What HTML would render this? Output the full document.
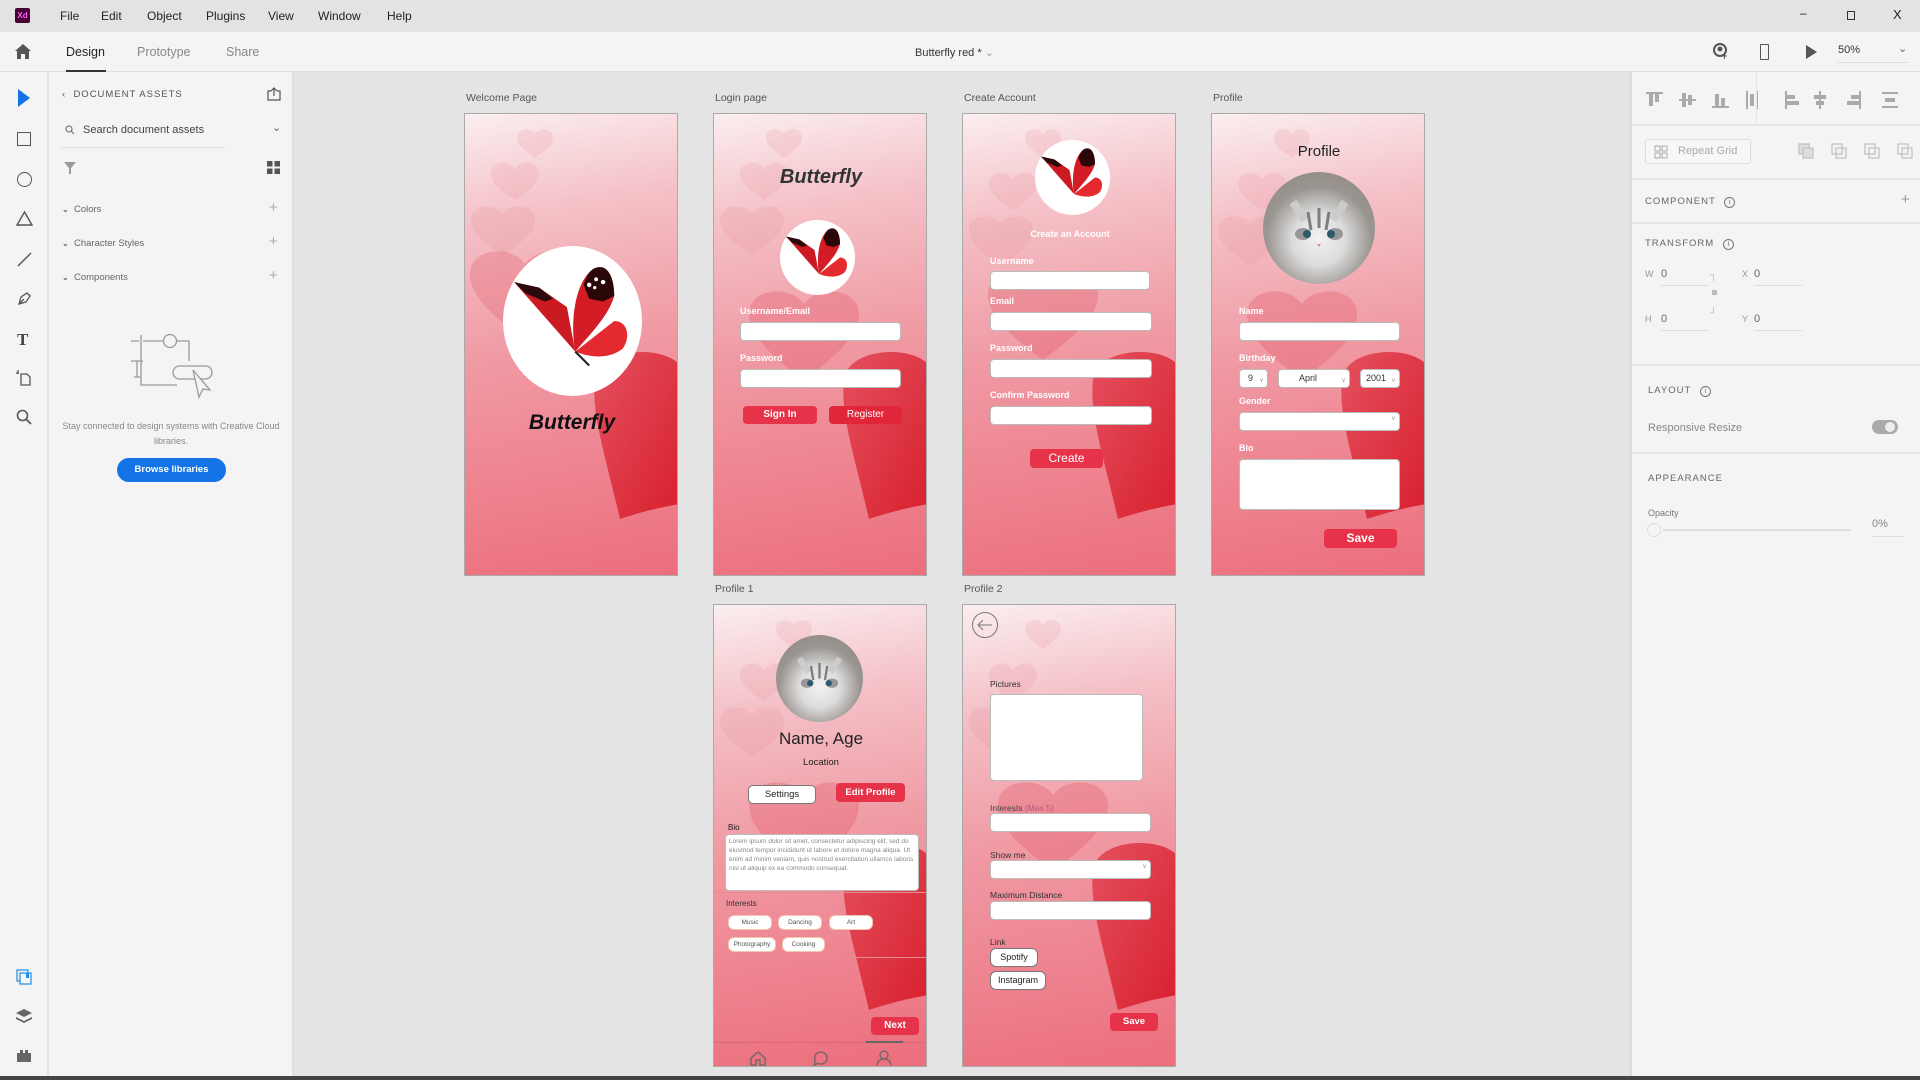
<!DOCTYPE html>
<html><head><meta charset="utf-8">
<style>
*{box-sizing:border-box;margin:0;padding:0}
body{width:1920px;height:1080px;overflow:hidden;background:#e4e4e4;font-family:"Liberation Sans",sans-serif;position:relative;color:#333}
.abs{position:absolute}
#menubar{left:0;top:0;width:1920px;height:32px;background:#e3e3e3}
#menubar span.m{position:absolute;top:9px;font-size:12px;color:#222}
#toolbar{left:0;top:32px;width:1920px;height:40px;background:#f4f4f4;border-bottom:1px solid #ddd}
#lefttools{left:0;top:72px;width:49px;height:1004px;background:#f4f4f4;border-right:2px solid #e2e2e2}
#assets{left:49px;top:72px;width:243px;height:1004px;background:#f4f4f4}
#right{left:1632px;top:72px;width:288px;height:1004px;background:#f4f4f4}
.hd{font-size:9.5px;letter-spacing:1px;color:#666}
.div{position:absolute;left:0;width:288px;height:2px;background:#e6e6e6}
.ab{position:absolute;width:214px;height:463px;border:1px solid #aaa;overflow:hidden;background:linear-gradient(170deg,#fbeef0 0%,#f4c1c7 22%,#f09aa4 50%,#ee8490 75%,#ec6e7c 100%)}
.ab svg.bg{position:absolute;left:0;top:0}
.lbl{position:absolute;font-size:10.5px;color:#555}
.fl{position:absolute;font-size:9px;font-weight:bold;color:#fff}
.in{position:absolute;background:#fff;border:1px solid #bbb;border-radius:4px}
.btn{position:absolute;background:#e6334a;color:#fff;font-weight:bold;font-size:10px;text-align:center;border-radius:4px}
.chip{position:absolute;background:#fff;border:1px solid #f0c8b0;border-radius:6px;font-size:6.5px;color:#555;text-align:center;height:15px;line-height:13px}
.circ{position:absolute;border-radius:50%;background:#fff;overflow:hidden}
.sel{font-size:9px;color:#333}
.sel i{position:absolute;right:4px;top:3px;font-style:normal;font-size:6px;color:#888}
</style></head><body>

<div id="menubar" class="abs">
 <div class="abs" style="left:15px;top:8px;width:15px;height:15px;background:#470137;border-radius:2px;color:#ff61f6;font-size:8px;line-height:15px;text-align:center;font-weight:bold">Xd</div>
 <span class="m" style="left:60px">File</span><span class="m" style="left:101px">Edit</span><span class="m" style="left:147px">Object</span><span class="m" style="left:206px">Plugins</span><span class="m" style="left:268px">View</span><span class="m" style="left:318px">Window</span><span class="m" style="left:387px">Help</span>
 <span class="m" style="left:1800px;top:6px">–</span>
 <div class="abs" style="left:1847px;top:11px;width:8px;height:9px;border:1px solid #333"></div>
 <span class="m" style="left:1893px;top:7px;font-size:13px">X</span>
</div>
<div id="toolbar" class="abs">
 <svg class="abs" style="left:15px;top:12px" width="16" height="15" viewBox="0 0 16 15"><path d="M8 0L0 7h2v8h4v-5h4v5h4V7h2z" fill="#555"/></svg>
 <span class="abs" style="left:66px;top:13px;font-size:12.5px;color:#222">Design</span>
 <div class="abs" style="left:66px;top:38px;width:40px;height:2px;background:#333"></div>
 <span class="abs" style="left:137px;top:13px;font-size:12.5px;color:#888">Prototype</span>
 <span class="abs" style="left:226px;top:13px;font-size:12.5px;color:#888">Share</span>
 <span class="abs" style="left:915px;top:14px;font-size:11px;color:#333">Butterfly red * <span style="color:#999">⌄</span></span>
 <svg class="abs" style="left:1712px;top:11px" width="16" height="17" viewBox="0 0 16 17"><circle cx="8" cy="7" r="6" fill="none" stroke="#555" stroke-width="2"/><circle cx="8" cy="6" r="2.5" fill="#555"/><path d="M10 13h5M12.5 11v5" stroke="#555"/></svg>
 <div class="abs" style="left:1760px;top:12px;width:9px;height:16px;border:1.5px solid #555;border-radius:1px"></div>
 <svg class="abs" style="left:1806px;top:13px" width="11" height="14"><path d="M0 0L11 7L0 14z" fill="#555"/></svg>
 <span class="abs" style="left:1838px;top:12px;font-size:11px;color:#333">50%</span>
 <div class="abs" style="left:1838px;top:30px;width:70px;height:1px;background:#ddd"></div>
 <span class="abs" style="left:1898px;top:10px;font-size:11px;color:#666">⌄</span>
</div>

<div id="lefttools" class="abs">
 <svg class="abs" style="left:18px;top:17px" width="12" height="18"><path d="M0 0L12 9L0 18z" fill="#1473e6"/></svg>
 <div class="abs" style="left:17px;top:60px;width:14px;height:14px;border:1.5px solid #555"></div>
 <div class="abs" style="left:17px;top:100px;width:15px;height:15px;border:1.5px solid #555;border-radius:50%"></div>
 <svg class="abs" style="left:16px;top:139px" width="17" height="15"><path d="M8.5 1L16 14H1z" fill="none" stroke="#555" stroke-width="1.4"/></svg>
 <svg class="abs" style="left:17px;top:180px" width="15" height="15"><path d="M1 14L14 1" stroke="#555" stroke-width="1.4"/></svg>
 <svg class="abs" style="left:17px;top:219px" width="15" height="15"><path d="M2 13L4 6L10 2L13 5L9 11Z M2 13L7 8" fill="none" stroke="#555" stroke-width="1.3"/></svg>
 <span class="abs" style="left:17px;top:258px;font-size:17px;font-weight:bold;font-family:'Liberation Serif',serif;color:#444">T</span>
 <svg class="abs" style="left:15px;top:297px" width="17" height="17"><path d="M1 4h3M3 1v4M6 5h6l3 3v8H6z" fill="none" stroke="#555" stroke-width="1.3"/></svg>
 <svg class="abs" style="left:16px;top:337px" width="16" height="16"><circle cx="6.5" cy="6.5" r="5" fill="none" stroke="#555" stroke-width="1.6"/><path d="M10 10l5 5" stroke="#555" stroke-width="1.8"/></svg>
 <svg class="abs" style="left:16px;top:897px" width="16" height="16"><rect x="1" y="1" width="11" height="11" fill="none" stroke="#1e8ee6" stroke-width="1.2"/><rect x="4" y="4" width="11" height="11" fill="#f4f4f4" stroke="#1e8ee6" stroke-width="1.2"/><rect x="10" y="4" width="3" height="5" fill="#1e8ee6"/></svg>
 <svg class="abs" style="left:16px;top:937px" width="16" height="14"><path d="M8 0L16 4L8 8L0 4Z" fill="#666"/><path d="M0 8L8 12L16 8L16 10L8 14L0 10Z" fill="#666"/></svg>
 <svg class="abs" style="left:17px;top:978px" width="14" height="12"><path d="M0 3h3V0h3v3h2V0h3v3h3v9H0z" fill="#666"/></svg>
</div>

<div id="assets" class="abs">
 <span class="abs hd" style="left:13px;top:17px;color:#555">‹&nbsp; DOCUMENT ASSETS</span>
 <svg class="abs" style="left:218px;top:15px" width="14" height="14"><path d="M4 4H1v9h12V4h-3M7 9V1M4 4l3-3 3 3" fill="none" stroke="#555" stroke-width="1.2"/></svg>
 <svg class="abs" style="left:16px;top:53px" width="10" height="10"><circle cx="4" cy="4" r="3" fill="none" stroke="#777" stroke-width="1.2"/><path d="M6 6l3 3" stroke="#777" stroke-width="1.2"/></svg>
 <span class="abs" style="left:34px;top:52px;font-size:11px;color:#444">Search document assets</span>
 <span class="abs" style="left:223px;top:49px;font-size:11px;color:#666">⌄</span>
 <div class="abs" style="left:12px;top:75px;width:164px;height:1px;background:#ddd"></div>
 <svg class="abs" style="left:15px;top:90px" width="12" height="12"><path d="M0 0h12L7 6v6H5V6z" fill="#999"/></svg>
 <svg class="abs" style="left:218px;top:89px" width="13" height="13"><rect x="0" y="0" width="5.5" height="5.5" fill="#555"/><rect x="7.5" y="0" width="5.5" height="5.5" fill="#555"/><rect x="0" y="7.5" width="5.5" height="5.5" fill="#555"/><rect x="7.5" y="7.5" width="5.5" height="5.5" fill="#555"/></svg>
 <span class="abs" style="left:13px;top:132px;font-size:9.5px;color:#666"><b style="font-size:8px">⌄</b>&nbsp; Colors</span>
 <span class="abs" style="left:13px;top:166px;font-size:9.5px;color:#666"><b style="font-size:8px">⌄</b>&nbsp; Character Styles</span>
 <span class="abs" style="left:13px;top:200px;font-size:9.5px;color:#666"><b style="font-size:8px">⌄</b>&nbsp; Components</span>
 <span class="abs" style="left:220px;top:127px;font-size:15px;color:#aaa">+</span>
 <span class="abs" style="left:220px;top:161px;font-size:15px;color:#aaa">+</span>
 <span class="abs" style="left:220px;top:195px;font-size:15px;color:#aaa">+</span>
 <svg class="abs" style="left:80px;top:258px" width="85" height="70" viewBox="0 0 85 70"><g fill="none" stroke="#999" stroke-width="1.3"><path d="M2 11h8M12 5v10M12 15v40h36M14 11h20"/><circle cx="41" cy="11" r="6.5"/><path d="M48 11h12v20"/><path d="M2 31h12M8 31v16M5 47h6"/><rect x="44" y="36" width="39" height="13" rx="6.5"/><path d="M64 40l17 20-7-1-4 8z" fill="#f4f4f4"/></g></svg>
 <div class="abs" style="left:8px;top:347px;width:228px;text-align:center;font-size:9px;line-height:15px;color:#888">Stay connected to design systems with Creative Cloud libraries.</div>
 <div class="abs" style="left:68px;top:386px;width:109px;height:24px;border-radius:12px;background:#1473e6;color:#fff;font-size:9.5px;font-weight:bold;text-align:center;line-height:24px">Browse libraries</div>
</div>
<div class="abs" style="left:292px;top:72px;width:2px;height:1004px;background:#e0e0e0"></div>

<div id="right" class="abs">
 <svg class="abs" style="left:14px;top:18px" width="270" height="20" viewBox="0 0 270 20" fill="#aaa">
  <rect x="0" y="2" width="17" height="2"/><rect x="3" y="4" width="4" height="12"/><rect x="9" y="4" width="4" height="8"/>
  <rect x="33" y="9" width="17" height="2"/><rect x="36" y="3" width="4" height="14"/><rect x="42" y="5" width="4" height="10"/>
  <rect x="66" y="16" width="17" height="2"/><rect x="69" y="4" width="4" height="12"/><rect x="75" y="8" width="4" height="8"/>
  <rect x="100" y="1" width="2" height="18"/><rect x="104" y="4" width="4" height="12"/><rect x="110" y="1" width="2" height="18"/>
  <rect x="139" y="1" width="2" height="18"/><rect x="141" y="5" width="8" height="4"/><rect x="141" y="11" width="12" height="4"/>
  <rect x="173" y="1" width="2" height="18"/><rect x="168" y="5" width="12" height="4"/><rect x="170" y="11" width="8" height="4"/>
  <rect x="213" y="1" width="2" height="18"/><rect x="205" y="5" width="8" height="4"/><rect x="201" y="11" width="12" height="4"/>
  <rect x="236" y="2" width="16" height="2"/><rect x="239" y="8" width="10" height="4"/><rect x="236" y="16" width="16" height="2"/>
 </svg>
 <div class="abs" style="left:124px;top:0;width:1px;height:52px;background:#e6e6e6"></div>
 <div class="div" style="top:52px"></div>
 <div class="abs" style="left:13px;top:67px;width:106px;height:25px;border:1px solid #ddd;border-radius:3px;background:#f7f7f7"></div>
 <svg class="abs" style="left:22px;top:73px" width="14" height="14" fill="none" stroke="#aaa"><rect x="1" y="1" width="5" height="5"/><rect x="8" y="1" width="5" height="5"/><rect x="1" y="8" width="5" height="5"/><rect x="8" y="8" width="5" height="5"/></svg>
 <span class="abs" style="left:46px;top:73px;font-size:11px;color:#aaa">Repeat Grid</span>
 <svg class="abs" style="left:166px;top:71px" width="118" height="18" fill="none" stroke="#c4c4c4" stroke-width="1.3"><rect x="1" y="1" width="10" height="10" fill="#ddd"/><rect x="5" y="5" width="10" height="10" fill="#ddd"/><rect x="34" y="1" width="10" height="10"/><rect x="38" y="5" width="10" height="10"/><rect x="67" y="1" width="10" height="10"/><rect x="71" y="5" width="10" height="10"/><rect x="100" y="1" width="10" height="10"/><rect x="104" y="5" width="10" height="10"/></svg>
 <div class="div" style="top:106px"></div>
 <span class="abs hd" style="left:13px;top:124px">COMPONENT <span style="display:inline-block;width:11px;height:11px;border:1px solid #777;border-radius:50%;font-size:7px;text-align:center;line-height:9px;letter-spacing:0;margin-left:5px">i</span></span>
 <span class="abs" style="left:269px;top:119px;font-size:15px;color:#999">+</span>
 <div class="div" style="top:150px"></div>
 <span class="abs hd" style="left:13px;top:166px">TRANSFORM <span style="display:inline-block;width:11px;height:11px;border:1px solid #777;border-radius:50%;font-size:7px;text-align:center;line-height:9px;letter-spacing:0;margin-left:5px">i</span></span>
 <span class="abs" style="left:13px;top:197px;font-size:9px;color:#999">W</span><span class="abs" style="left:29px;top:196px;font-size:11px;color:#666">0</span>
 <div class="abs" style="left:29px;top:213px;width:48px;height:1px;background:#ddd"></div>
 <span class="abs" style="left:78px;top:198px;font-size:10px;color:#bbb">┐</span>
 <div class="abs" style="left:80px;top:218px;width:5px;height:5px;background:#bbb"></div>
 <span class="abs" style="left:78px;top:236px;font-size:10px;color:#bbb">┘</span>
 <span class="abs" style="left:110px;top:197px;font-size:9px;color:#999">X</span><span class="abs" style="left:122px;top:196px;font-size:11px;color:#666">0</span>
 <div class="abs" style="left:122px;top:213px;width:48px;height:1px;background:#ddd"></div>
 <span class="abs" style="left:13px;top:242px;font-size:9px;color:#999">H</span><span class="abs" style="left:29px;top:241px;font-size:11px;color:#666">0</span>
 <div class="abs" style="left:29px;top:258px;width:48px;height:1px;background:#ddd"></div>
 <span class="abs" style="left:110px;top:242px;font-size:9px;color:#999">Y</span><span class="abs" style="left:122px;top:241px;font-size:11px;color:#666">0</span>
 <div class="abs" style="left:122px;top:258px;width:48px;height:1px;background:#ddd"></div>
 <div class="div" style="top:292px"></div>
 <span class="abs hd" style="left:16px;top:313px">LAYOUT <span style="display:inline-block;width:11px;height:11px;border:1px solid #777;border-radius:50%;font-size:7px;text-align:center;line-height:9px;letter-spacing:0;margin-left:5px">i</span></span>
 <span class="abs" style="left:16px;top:350px;font-size:11px;color:#888">Responsive Resize</span>
 <div class="abs" style="left:240px;top:348px;width:26px;height:14px;border-radius:7px;background:#aaa"></div>
 <div class="abs" style="left:253px;top:350px;width:10px;height:10px;border-radius:50%;background:#eee"></div>
 <div class="div" style="top:380px"></div>
 <span class="abs hd" style="left:16px;top:401px">APPEARANCE</span>
 <span class="abs" style="left:16px;top:436px;font-size:9px;color:#777">Opacity</span>
 <div class="abs" style="left:15px;top:451px;width:14px;height:14px;border-radius:50%;border:1.5px solid #ddd;background:#f4f4f4"></div>
 <div class="abs" style="left:31px;top:457px;width:188px;height:2px;background:#ddd"></div>
 <span class="abs" style="left:240px;top:446px;font-size:11px;color:#888">0%</span>
 <div class="abs" style="left:240px;top:464px;width:32px;height:1px;background:#ddd"></div>
</div>
<div class="abs" style="left:1630px;top:72px;width:2px;height:1004px;background:#dcdcdc"></div>
<div class="abs" style="left:0;top:1076px;width:1920px;height:4px;background:#444"></div>

<span class="lbl" style="left:466px;top:92px">Welcome Page</span>
<span class="lbl" style="left:715px;top:92px">Login page</span>
<span class="lbl" style="left:964px;top:92px">Create Account</span>
<span class="lbl" style="left:1213px;top:92px">Profile</span>
<span class="lbl" style="left:715px;top:583px">Profile 1</span>
<span class="lbl" style="left:964px;top:583px">Profile 2</span>

<!-- WELCOME -->
<div class="ab" style="left:464px;top:113px">
 <svg class="bg" width="214" height="463" viewBox="0 0 214 463"><defs><linearGradient id="hr" x1="0" y1="0" x2="1" y2="1"><stop offset="0" stop-color="#e4505e"/><stop offset="1" stop-color="#d8202e"/></linearGradient></defs>
  <g fill="#e88a96" opacity=".18"><path d="M70 20c5-8 18-6 18 4 0 8-10 14-18 20-8-6-18-12-18-20 0-10 13-12 18-4z"/><path d="M50 55c6-10 24-8 24 5 0 10-12 18-24 26-12-8-24-16-24-26 0-13 18-15 24-5z"/><path d="M38 100c8-12 32-10 32 6 0 14-16 24-32 36-16-12-32-22-32-36 0-16 24-18 32-6z"/></g>
  <path d="M60 150c14-20 55-16 55 10 0 25-28 45-55 66-27-21-55-41-55-66 0-26 41-30 55-10z" fill="#e25d6b" opacity=".3"/>
  <path d="M214 250c-20-20-80-15-84 15-4 35 10 75 25 140 30-10 45-12 59-15z" fill="url(#hr)"/>
 </svg>
 <div class="circ" style="left:38px;top:132px;width:139px;height:150px">
  <svg width="139" height="150" viewBox="0 0 100 100"><path d="M52 72L8 22l18 4 20 14z" fill="#cc1a22"/><path d="M8 22l18 4 10 8-6 2-14-6z" fill="#2a0a0a"/><path d="M52 72C48 50 52 20 66 12c10-4 14 8 14 20-4 14-16 26-28 40z" fill="#d41c26"/><path d="M66 12c10-4 14 8 14 20l-8 4-10-2-4-10c2-6 4-10 8-12z" fill="#2a0808"/><circle cx="62" cy="24" r="1.6" fill="#fff"/><circle cx="67" cy="20" r="1.4" fill="#fff"/><circle cx="72" cy="22" r="1.6" fill="#fff"/><circle cx="66" cy="26" r="1.2" fill="#fff"/><path d="M52 72l28-22c10 0 12 12 6 20-10 8-24 6-34 2z" fill="#e52a2f"/><path d="M52 72l10 10" stroke="#222" stroke-width="1.5"/></svg>
 </div>
 <div class="abs" style="left:0;top:297px;width:214px;text-align:center;font-size:21px;font-style:italic;font-weight:bold;color:#111">Butterfly</div>
</div>

<!-- LOGIN -->
<div class="ab" style="left:713px;top:113px">
 <svg class="bg" width="214" height="463" viewBox="0 0 214 463">
  <g fill="#e88a96" opacity=".18"><path d="M70 20c5-8 18-6 18 4 0 8-10 14-18 20-8-6-18-12-18-20 0-10 13-12 18-4z"/><path d="M50 55c6-10 24-8 24 5 0 10-12 18-24 26-12-8-24-16-24-26 0-13 18-15 24-5z"/><path d="M38 100c8-12 32-10 32 6 0 14-16 24-32 36-16-12-32-22-32-36 0-16 24-18 32-6z"/></g>
  <path d="M90 190c14-20 55-16 55 10 0 25-28 45-55 66-27-21-55-41-55-66 0-26 41-30 55-10z" fill="#e25d6b" opacity=".35"/>
  <path d="M214 250c-20-20-80-15-84 15-4 35 10 75 25 140 30-10 45-12 59-15z" fill="url(#hr)"/>
 </svg>
 <div class="abs" style="left:0;top:52px;width:214px;text-align:center;font-size:20px;font-style:italic;font-weight:bold;color:#333">Butterfly</div>
 <div class="circ" style="left:66px;top:106px;width:75px;height:75px">
  <svg width="75" height="75" viewBox="0 0 100 100"><path d="M52 72L8 22l18 4 20 14z" fill="#cc1a22"/><path d="M8 22l18 4 10 8-6 2-14-6z" fill="#2a0a0a"/><path d="M52 72C48 50 52 20 66 12c10-4 14 8 14 20-4 14-16 26-28 40z" fill="#d41c26"/><path d="M66 12c10-4 14 8 14 20l-8 4-10-2-4-10c2-6 4-10 8-12z" fill="#2a0808"/><path d="M52 72l28-22c10 0 12 12 6 20-10 8-24 6-34 2z" fill="#e52a2f"/></svg>
 </div>
 <div class="fl" style="left:26px;top:192px">Username/Email</div>
 <div class="in" style="left:26px;top:208px;width:161px;height:19px"></div>
 <div class="fl" style="left:26px;top:239px">Password</div>
 <div class="in" style="left:26px;top:255px;width:161px;height:19px"></div>
 <div class="btn" style="left:29px;top:292px;width:74px;height:18px;line-height:18px">Sign In</div>
 <div class="btn" style="left:115px;top:292px;width:73px;height:18px;line-height:18px;background:#e2263a;font-weight:normal">Register</div>
</div>

<!-- CREATE -->
<div class="ab" style="left:962px;top:113px">
 <svg class="bg" width="214" height="463" viewBox="0 0 214 463">
  <g fill="#e88a96" opacity=".18"><path d="M80 20c5-8 18-6 18 4 0 8-10 14-18 20-8-6-18-12-18-20 0-10 13-12 18-4z"/><path d="M50 65c6-10 24-8 24 5 0 10-12 18-24 26-12-8-24-16-24-26 0-13 18-15 24-5z"/><path d="M38 110c8-12 32-10 32 6 0 14-16 24-32 36-16-12-32-22-32-36 0-16 24-18 32-6z"/></g>
  <path d="M80 170c14-20 55-16 55 10 0 25-28 45-55 66-27-21-55-41-55-66 0-26 41-30 55-10z" fill="#e25d6b" opacity=".35"/>
  <path d="M214 250c-20-20-80-15-84 15-4 35 10 75 25 140 30-10 45-12 59-15z" fill="url(#hr)"/>
 </svg>
 <div class="circ" style="left:72px;top:26px;width:75px;height:75px">
  <svg width="75" height="75" viewBox="0 0 100 100"><path d="M52 72L8 22l18 4 20 14z" fill="#cc1a22"/><path d="M8 22l18 4 10 8-6 2-14-6z" fill="#2a0a0a"/><path d="M52 72C48 50 52 20 66 12c10-4 14 8 14 20-4 14-16 26-28 40z" fill="#d41c26"/><path d="M66 12c10-4 14 8 14 20l-8 4-10-2-4-10c2-6 4-10 8-12z" fill="#2a0808"/><path d="M52 72l28-22c10 0 12 12 6 20-10 8-24 6-34 2z" fill="#e52a2f"/></svg>
 </div>
 <div class="fl" style="left:0;width:214px;text-align:center;top:115px">Create an Account</div>
 <div class="fl" style="left:27px;top:142px">Username</div>
 <div class="in" style="left:27px;top:157px;width:160px;height:19px"></div>
 <div class="fl" style="left:27px;top:182px">Email</div>
 <div class="in" style="left:27px;top:198px;width:162px;height:19px"></div>
 <div class="fl" style="left:27px;top:229px">Password</div>
 <div class="in" style="left:27px;top:245px;width:162px;height:19px"></div>
 <div class="fl" style="left:27px;top:276px">Confirm Password</div>
 <div class="in" style="left:27px;top:292px;width:162px;height:19px"></div>
 <div class="btn" style="left:67px;top:335px;width:73px;height:19px;line-height:19px;font-size:12px;font-weight:normal">Create</div>
</div>

<!-- PROFILE -->
<div class="ab" style="left:1211px;top:113px">
 <svg class="bg" width="214" height="463" viewBox="0 0 214 463">
  <g fill="#e88a96" opacity=".18"><path d="M80 20c5-8 18-6 18 4 0 8-10 14-18 20-8-6-18-12-18-20 0-10 13-12 18-4z"/><path d="M50 65c6-10 24-8 24 5 0 10-12 18-24 26-12-8-24-16-24-26 0-13 18-15 24-5z"/><path d="M38 110c8-12 32-10 32 6 0 14-16 24-32 36-16-12-32-22-32-36 0-16 24-18 32-6z"/></g>
  <path d="M90 190c14-20 55-16 55 10 0 25-28 45-55 66-27-21-55-41-55-66 0-26 41-30 55-10z" fill="#e25d6b" opacity=".35"/>
  <path d="M214 250c-20-20-80-15-84 15-4 35 10 75 25 140 30-10 45-12 59-15z" fill="url(#hr)"/>
 </svg>
 <div class="abs" style="left:0;top:29px;width:214px;text-align:center;font-size:15px;color:#222">Profile</div>
 <div class="circ" style="left:51px;top:58px;width:112px;height:112px;background:radial-gradient(circle at 50% 60%,#f2f2f2 0,#dcdcdc 30%,#9a9590 60%,#8c8580 100%)">
  <svg width="112" height="112" viewBox="0 0 112 112"><path d="M30 30l12 18M82 30l-12 18" stroke="#ccc" stroke-width="8"/><path d="M45 40l3 18M56 36v20M66 40l-3 18" stroke="#555" stroke-width="3" opacity=".7"/><ellipse cx="40" cy="62" rx="8" ry="6" fill="#666" opacity=".6"/><ellipse cx="72" cy="62" rx="8" ry="6" fill="#666" opacity=".6"/><circle cx="44" cy="62" r="4" fill="#2e5a6a"/><circle cx="68" cy="62" r="4" fill="#2e5a6a"/><path d="M54 72h4l-2 3z" fill="#d88"/></svg>
 </div>
 <div class="fl" style="left:27px;top:192px">Name</div>
 <div class="in" style="left:27px;top:208px;width:161px;height:19px"></div>
 <div class="fl" style="left:27px;top:239px">Birthday</div>
 <div class="in sel" style="left:27px;top:255px;width:29px;height:19px;line-height:17px;padding-left:8px">9<i>v</i></div>
 <div class="in sel" style="left:66px;top:255px;width:72px;height:19px;line-height:17px;padding-left:20px">April<i>v</i></div>
 <div class="in sel" style="left:148px;top:255px;width:40px;height:19px;line-height:17px;padding-left:5px">2001<i>v</i></div>
 <div class="fl" style="left:27px;top:282px">Gender</div>
 <div class="in sel" style="left:27px;top:298px;width:161px;height:19px"><i>v</i></div>
 <div class="fl" style="left:27px;top:329px">Bio</div>
 <div class="in" style="left:27px;top:345px;width:161px;height:51px"></div>
 <div class="btn" style="left:112px;top:415px;width:73px;height:19px;line-height:19px;font-size:12px">Save</div>
</div>

<!-- PROFILE 1 -->
<div class="ab" style="left:713px;top:604px">
 <svg class="bg" width="214" height="463" viewBox="0 0 214 463">
  <g fill="#e88a96" opacity=".18"><path d="M80 20c5-8 18-6 18 4 0 8-10 14-18 20-8-6-18-12-18-20 0-10 13-12 18-4z"/><path d="M50 65c6-10 24-8 24 5 0 10-12 18-24 26-12-8-24-16-24-26 0-13 18-15 24-5z"/><path d="M38 110c8-12 32-10 32 6 0 14-16 24-32 36-16-12-32-22-32-36 0-16 24-18 32-6z"/></g>
  <path d="M90 190c14-20 55-16 55 10 0 25-28 45-55 66-27-21-55-41-55-66 0-26 41-30 55-10z" fill="#e25d6b" opacity=".35"/>
  <path d="M214 250c-20-20-80-15-84 15-4 35 10 75 25 140 30-10 45-12 59-15z" fill="url(#hr)"/>
 </svg>
 <div class="circ" style="left:62px;top:30px;width:87px;height:87px;background:radial-gradient(circle at 50% 60%,#f2f2f2 0,#dcdcdc 30%,#9a9590 60%,#8c8580 100%)">
  <svg width="87" height="87" viewBox="0 0 112 112"><path d="M30 30l12 18M82 30l-12 18" stroke="#ccc" stroke-width="8"/><path d="M45 40l3 18M56 36v20M66 40l-3 18" stroke="#555" stroke-width="3" opacity=".7"/><ellipse cx="40" cy="62" rx="8" ry="6" fill="#666" opacity=".6"/><ellipse cx="72" cy="62" rx="8" ry="6" fill="#666" opacity=".6"/><circle cx="44" cy="62" r="4" fill="#2e5a6a"/><circle cx="68" cy="62" r="4" fill="#2e5a6a"/></svg>
 </div>
 <div class="abs" style="left:0;top:124px;width:214px;text-align:center;font-size:17px;color:#222">Name, Age</div>
 <div class="abs" style="left:0;top:152px;width:214px;text-align:center;font-size:9.5px;color:#222">Location</div>
 <div class="in" style="left:34px;top:180px;width:68px;height:19px;border:1px solid #777;border-radius:5px;font-size:9.5px;text-align:center;line-height:17px;color:#222">Settings</div>
 <div class="btn" style="left:122px;top:178px;width:69px;height:19px;line-height:19px;font-size:9.5px">Edit Profile</div>
 <div class="abs" style="left:14px;top:218px;font-size:8px;color:#222">Bio</div>
 <div class="in" style="left:11px;top:229px;width:194px;height:57px;padding:2px 3px;font-size:6.5px;line-height:9px;color:#888">Lorem ipsum dolor sit amet, consectetur adipiscing elit, sed do eiusmod tempor incididunt ut labore et dolore magna aliqua. Ut enim ad minim veniam, quis nostrud exercitation ullamco laboris nisi ut aliquip ex ea commodo consequat.</div>
 <div class="abs" style="left:0;top:287px;width:214px;height:1px;background:#e68a94"></div>
 <div class="abs" style="left:12px;top:294px;font-size:8px;color:#333">Interests</div>
 <div class="chip" style="left:14px;top:310px;width:44px">Music</div>
 <div class="chip" style="left:64px;top:310px;width:44px">Dancing</div>
 <div class="chip" style="left:115px;top:310px;width:44px">Art</div>
 <div class="chip" style="left:14px;top:332px;width:48px">Photography</div>
 <div class="chip" style="left:68px;top:332px;width:43px">Cooking</div>
 <div class="abs" style="left:0;top:352px;width:214px;height:1px;background:#e68a94"></div>
 <div class="btn" style="left:157px;top:412px;width:48px;height:18px;line-height:18px;font-size:10px">Next</div>
 <div class="abs" style="left:0;top:437px;width:214px;height:1px;background:#d86a76"></div>
 <div class="abs" style="left:152px;top:436px;width:37px;height:2px;background:#666"></div>
 <svg class="abs" style="left:36px;top:446px" width="16" height="15"><path d="M1 7L8 1l7 6v7H10v-5H6v5H1z" fill="none" stroke="#666" stroke-width="1.3"/></svg>
 <svg class="abs" style="left:99px;top:446px" width="16" height="15"><path d="M8 1a6.5 6 0 1 1-3 11.5L1 14l1.5-4A6.5 6 0 0 1 8 1z" fill="none" stroke="#666" stroke-width="1.3"/></svg>
 <svg class="abs" style="left:162px;top:445px" width="16" height="16"><circle cx="8" cy="5" r="4" fill="none" stroke="#666" stroke-width="1.3"/><path d="M1 15c1-5 4-6 7-6s6 1 7 6" fill="none" stroke="#666" stroke-width="1.3"/></svg>
</div>

<!-- PROFILE 2 -->
<div class="ab" style="left:962px;top:604px">
 <svg class="bg" width="214" height="463" viewBox="0 0 214 463">
  <g fill="#e88a96" opacity=".18"><path d="M80 20c5-8 18-6 18 4 0 8-10 14-18 20-8-6-18-12-18-20 0-10 13-12 18-4z"/><path d="M50 65c6-10 24-8 24 5 0 10-12 18-24 26-12-8-24-16-24-26 0-13 18-15 24-5z"/><path d="M38 110c8-12 32-10 32 6 0 14-16 24-32 36-16-12-32-22-32-36 0-16 24-18 32-6z"/></g>
  <path d="M90 190c14-20 55-16 55 10 0 25-28 45-55 66-27-21-55-41-55-66 0-26 41-30 55-10z" fill="#e25d6b" opacity=".35"/>
  <path d="M214 250c-20-20-80-15-84 15-4 35 10 75 25 140 30-10 45-12 59-15z" fill="url(#hr)"/>
 </svg>
 <svg class="abs" style="left:8px;top:6px" width="28" height="28"><circle cx="14" cy="14" r="12.5" fill="none" stroke="#777"/><path d="M21 14H7M12 9l-5 5 5 5" fill="none" stroke="#777"/></svg>
 <div class="abs" style="left:27px;top:74px;font-size:8.5px;color:#333">Pictures</div>
 <div class="in" style="left:27px;top:89px;width:153px;height:87px"></div>
 <div class="abs" style="left:27px;top:198px;font-size:8.5px;color:#444">Interests <span style="color:#b57">(Max 5)</span></div>
 <div class="in" style="left:27px;top:208px;width:161px;height:19px"></div>
 <div class="abs" style="left:27px;top:245px;font-size:8.5px;color:#333">Show me</div>
 <div class="in sel" style="left:27px;top:255px;width:161px;height:19px"><i>v</i></div>
 <div class="abs" style="left:27px;top:285px;font-size:8.5px;color:#333">Maximum Distance</div>
 <div class="in" style="left:27px;top:296px;width:161px;height:19px"></div>
 <div class="abs" style="left:27px;top:332px;font-size:8.5px;color:#333">Link</div>
 <div class="in" style="left:27px;top:343px;width:48px;height:19px;border:1px solid #777;border-radius:6px;font-size:9px;text-align:center;line-height:17px;color:#222">Spotify</div>
 <div class="in" style="left:27px;top:366px;width:56px;height:19px;border:1px solid #777;border-radius:6px;font-size:9px;text-align:center;line-height:17px;color:#222">Instagram</div>
 <div class="btn" style="left:147px;top:408px;width:48px;height:18px;line-height:18px;font-size:9.5px">Save</div>
</div>

</body></html>
